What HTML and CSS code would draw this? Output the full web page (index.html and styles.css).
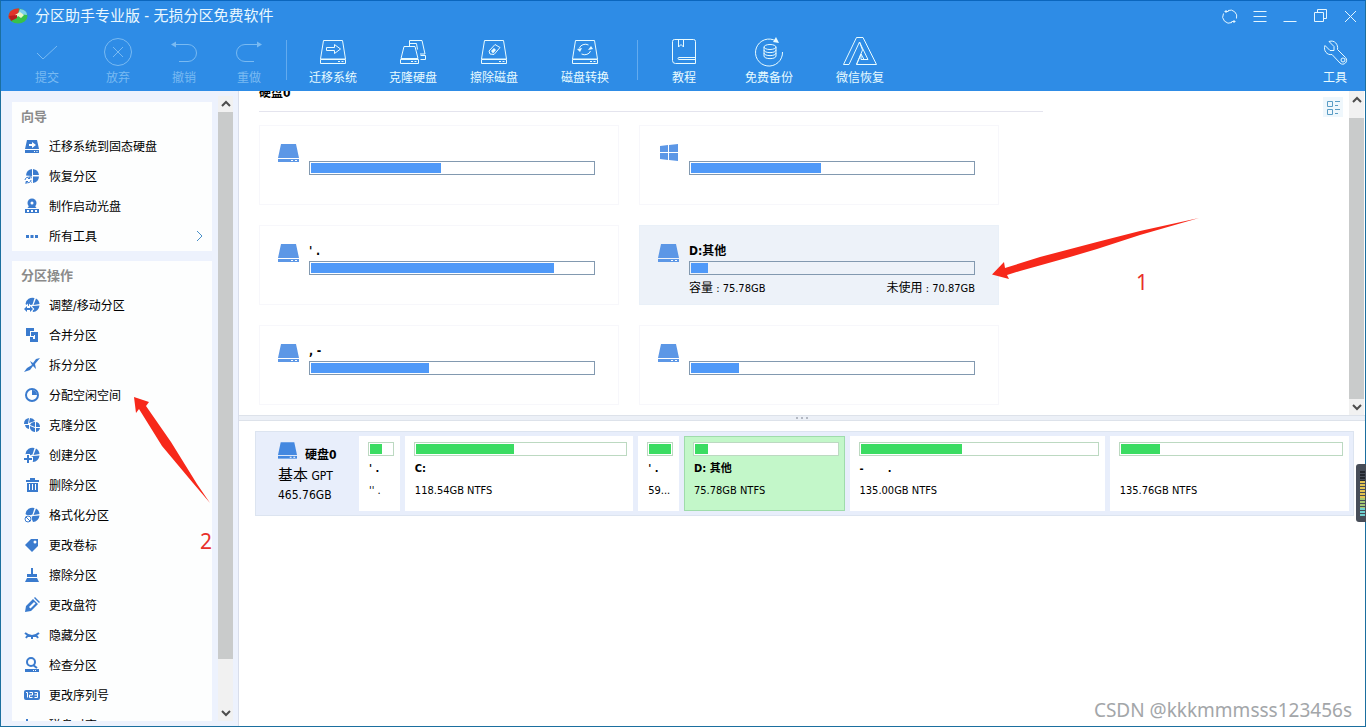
FILE: index.html
```html
<!DOCTYPE html>
<html lang="zh-CN">
<head>
<meta charset="utf-8">
<title>分区助手专业版 - 无损分区免费软件</title>
<link rel="stylesheet" href="styles.css">
</head>
<body>
<svg class="defs" aria-hidden="true">
  <symbol id="disk" viewBox="0 0 21 18"><path d="M3 0h15l3 14H0z"/><path d="M0 15h21v3H0z"/><path d="M13 16h2v1h-2zM17 16h2v1h-2z" fill="#fff"/></symbol>
  <symbol id="case" viewBox="0 0 30 30"><path d="M5.500 3.500h19l3 18.500h-25z M2.500 22.500h25v4h-25z M20 24.500h2 M23.500 24.500h2"/></symbol>
  <symbol id="pie" viewBox="0 0 16 16"><path d="M8 1a7 7 0 0 0-6 6.500l6 .5z M9 1v6h6a7 7 0 0 0-6-6z M15 8.500H9V15a7 7 0 0 0 6-6.500z M3 8.500h5V15a7 7 0 0 1-5-6.500z"/></symbol>
  <symbol id="pie2" viewBox="0 0 16 16"><path d="M1.500 7a7 7 0 0 1 9-6L8.500 7.500 4 9z M12 1.500a7 7 0 0 1 3.500 5.500l-6 1z M15.500 8.500a7 7 0 0 1-6.500 6.500L7 10l2-1z"/></symbol>
</svg>
<div class="window">
  <header class="header">
    <div class="titlebar">
      <svg class="logo" viewBox="0 0 20 16"><ellipse cx="10" cy="8" rx="9.500" ry="7.500" fill="#37c24a"/><path d="M10 8L1 11A9 8 0 0 1 11 0.500z" fill="#e0332c"/><path d="M10 6L12 1Q19 2 19 7z" fill="#7fd0ee"/><path d="M7 7l5-3 4 3-3 3-3-2-2 2z" fill="#e9f6c8"/><path d="M1 8l8-1v3l-6 3z" fill="#b81d20"/></svg>
      <h1 class="title">分区助手专业版 - 无损分区免费软件</h1>
      <button class="winbtn" aria-label="刷新"><svg viewBox="0 0 18 18"><path d="M15.500 11.500A6.500 6.500 0 0 0 7 3.500M2.500 6.500a6.500 6.500 0 0 0 8.500 9M3.500 4.500h4M14.500 14.500h-4M5 3v3M13 13v3"/></svg></button>
      <button class="winbtn" aria-label="菜单"><svg viewBox="0 0 18 18"><path d="M2.500 4.500h13M2.500 9.500h13M2.500 14.500h13"/></svg></button>
      <button class="winbtn" aria-label="最小化"><svg viewBox="0 0 18 18"><path d="M2.500 14.500h13"/></svg></button>
      <button class="winbtn" aria-label="还原"><svg viewBox="0 0 18 18"><path d="M3.500 5.500h9v9h-9zM6.500 5V2.500h9v9h-3"/></svg></button>
      <button class="winbtn" aria-label="关闭"><svg viewBox="0 0 18 18"><path d="M4 4l11 11M15 4L4 15"/></svg></button>
    </div>
    <nav class="toolbar">
      <button class="tool" disabled><svg viewBox="0 0 30 30"><path d="M5 16l6 6L25 9"/></svg>提交</button>
      <button class="tool" disabled><svg viewBox="0 0 30 30"><circle cx="15" cy="15" r="13.500"/><path d="M10 10l10 10M20 10L10 20"/></svg>放弃</button>
      <button class="tool" disabled><svg viewBox="0 0 30 30"><path d="M4 7.500h15a8.500 8.500 0 0 1 0 17H10"/><path d="M2 7.500l5-3v6z" class="solid"/></svg>撤销</button>
      <button class="tool" disabled><svg viewBox="0 0 30 30"><path d="M26 7.500H11a8.500 8.500 0 0 0 0 17H20"/><path d="M28 7.500l-5-3v6z" class="solid"/></svg>重做</button>
      <span class="sep"></span>
      <button class="tool"><svg viewBox="0 0 30 30"><use href="#case"/><path d="M8.500 10.500h8v-3l6 4.500-6 4.500v-3h-8z"/></svg>迁移系统</button>
      <button class="tool"><svg viewBox="0 0 30 30"><path d="M6 9.500h11l3 12H3z M2.500 22.500h18v4h-18z M13 24.500h2M16.500 24.500h2M11.500 9V3.500H24l3 13.500h-5M22.500 18.500h5v4h-5M19.500 12.500l-1-6h-7"/></svg>克隆硬盘</button>
      <button class="tool"><svg viewBox="0 0 30 30"><use href="#case"/><path d="M10 14l6-6.500 5 3-6 7-4-.5z"/><path d="M12 14l3-3 2 2-3 3.500z" class="solid"/></svg>擦除磁盘</button>
      <button class="tool"><svg viewBox="0 0 30 30"><use href="#case"/><path d="M9.500 11a6 5 0 0 1 9-3M20.500 14a6 5 0 0 1-9 3"/><path d="M7 12l5-1-2 4zM18 13l5-1-2-3z" class="solid"/></svg>磁盘转换</button>
      <span class="sep"></span>
      <button class="tool"><svg viewBox="0 0 30 30"><path d="M5.500 2.500h19a2 2 0 0 1 2 2v22h-20a3 3 0 0 1-3-3v-19a2 2 0 0 1 2-2zM9.500 3v7l2.500-2.500 2.500 2.500V3M26 20.500H10a1 1 0 0 0 0 2h16"/></svg>教程</button>
      <button class="tool"><svg viewBox="0 0 30 30"><path d="M22 4A13.500 13.500 0 1 0 28.500 15"/><path d="M22 0l3 6-6-1z" class="solid"/><ellipse cx="16" cy="10" rx="6" ry="2.500"/><path d="M10 10v9c0 3.500 12 3.500 12 0v-9M10 13c0 3.500 12 3.500 12 0M10 16c0 3.500 12 3.500 12 0"/></svg>免费备份</button>
      <button class="tool"><svg class="wide" viewBox="0 0 36 30"><path d="M14.500.5h6.500L34.500 27.500H14.500L19 17l3 5.500h4L17.500 5 7 27.500H1.500zM17.500 5l3 8-6 14.500M19 17v5.500h3"/></svg>微信恢复</button>
      <button class="tool last"><svg viewBox="0 0 30 30"><path d="M9 4.500l5 5v4h-4l-5-5c-2 5 2 10 7 9l8 8.500c3.500 3.500 9-1.500 5.500-5.500L17.500 12.500c1-5-3-10-8.500-8z"/><circle cx="23" cy="23" r="2"/></svg>工具</button>
    </nav>
  </header>
  <div class="body">
    <aside class="sidebar">
      <div class="panels">
        <section class="panel">
          <h2>向导</h2>
          <button class="row"><svg viewBox="0 0 16 16"><path d="M3 2h10l2 9H1z M1 12h14v3H1z"/><path d="M5 6h3V4l4 3-4 3V8H5zM10 13h1v1h-1zM12.500 13h1v1h-1z" fill="#fff"/></svg><span>迁移系统到固态硬盘</span></button>
          <button class="row"><svg viewBox="0 0 16 16"><use href="#pie"/><circle cx="4" cy="12" r="4" fill="#fff"/><path d="M1 12a3 3 0 0 1 5-2M7 12a3 3 0 0 1-5 2M6 8v2.500H4M2 16v-2.500h2" class="line"/></svg><span>恢复分区</span></button>
          <button class="row"><svg viewBox="0 0 16 16"><path d="M1 11h14v4H1z M3 10c1 0 2-2 2-3h6c0 1 1 3 2 3z"/><circle cx="8" cy="5" r="4.500"/><circle cx="8" cy="5" r="1.500" fill="#fff"/><path d="M3 12h2v2H3zM7 12h2v2H7zM11 12h2v2h-2z" fill="#fff"/></svg><span>制作启动光盘</span></button>
          <button class="row"><svg viewBox="0 0 16 16"><path d="M2 7h3v3H2zM6.500 7h3v3h-3zM11 7h3v3h-3z"/></svg><span>所有工具</span><svg class="chev" viewBox="0 0 8 12"><path d="M2 1l5 5-5 5"/></svg></button>
        </section>
        <section class="panel">
          <h2>分区操作</h2>
          <button class="row"><svg viewBox="0 0 16 16"><use href="#pie2"/><path d="M0 12l3-3v2h3V9l3 3-3 3v-2H3v2z" class="halo"/></svg><span>调整/移动分区</span></button>
          <button class="row"><svg viewBox="0 0 16 16"><path d="M2 1h8v3H6v5H2z M7 5h7v10H6v-5h3v2h2V8H7z"/><path d="M7 5h3v4H7z"/></svg><span>合并分区</span></button>
          <button class="row"><svg viewBox="0 0 16 16"><path d="M16 1l-4 1-3 4-3-2 2 4-5 3-3 4 6-2 3-4 3 3-1-5z"/></svg><span>拆分分区</span></button>
          <button class="row"><svg viewBox="0 0 16 16"><circle cx="8" cy="8" r="6" class="ring"/><path d="M8 3a5 5 0 0 1 5 5H8z"/></svg><span>分配空闲空间</span></button>
          <button class="row"><svg viewBox="0 0 16 16"><path d="M0 7a6 6 0 0 1 5-6l-1 6zM6 1a6 6 0 0 1 5 3l-6 2zM1 8h4v4a5 5 0 0 1-4-4zM6 8a5 5 0 0 1 5-3v5zM12 5a5 5 0 0 1 4 5h-4zM6 9l5 2v4a5 5 0 0 1-5-6zM12 11h4a5 5 0 0 1-4 4z"/></svg><span>克隆分区</span></button>
          <button class="row"><svg viewBox="0 0 16 16"><use href="#pie2"/><path d="M3 8h2v3h3v2H5v3H3v-3H0v-2h3z" class="halo"/></svg><span>创建分区</span></button>
          <button class="row"><svg viewBox="0 0 16 16"><path d="M6 1h5v2h4v2H2V3h4zM3 6h11v9H3z"/><path d="M5 7h1v6H5zM8 7h1v6H8zM11 7h1v6h-1z" fill="#fff"/></svg><span>删除分区</span></button>
          <button class="row"><svg viewBox="0 0 16 16"><use href="#pie2"/><circle cx="4" cy="12" r="4" fill="#fff"/><circle cx="4" cy="12" r="3" class="line"/><path d="M2 10l4 4" class="line"/></svg><span>格式化分区</span></button>
          <button class="row"><svg viewBox="0 0 16 16"><path d="M1 8l6-6 7 0v7l-6 6z"/><circle cx="11" cy="5" r="1.500" fill="#fff"/></svg><span>更改卷标</span></button>
          <button class="row"><svg viewBox="0 0 16 16"><path d="M7 1h2v6h4v3H3V7h4zM3 11h10l2 4H1z"/></svg><span>擦除分区</span></button>
          <button class="row"><svg viewBox="0 0 16 16"><path d="M1 15l1-6 7-7 5 5-7 7zM10 1l1-1 5 5-1 1z"/><path d="M5 10l5-5 1.500 1.500-5 5z" fill="#fff"/></svg><span>更改盘符</span></button>
          <button class="row"><svg viewBox="0 0 16 16"><path d="M1 6q7 6 14 0M4 8l-2 3M8 9v3M12 8l2 3" class="ring"/></svg><span>隐藏分区</span></button>
          <button class="row"><svg viewBox="0 0 16 16"><circle cx="7" cy="5" r="4" class="ring"/><path d="M9 8l4 3" class="ring"/><path d="M1 12h14v3H1z"/><path d="M9 13h1v1H9zM11 13h1v1h-1z" fill="#fff"/></svg><span>检查分区</span></button>
          <button class="row"><svg viewBox="0 0 16 16"><rect x="0" y="3" width="16" height="10" rx="2"/><path d="M2 5.500h1.500v5M5.500 5.500h3V8h-3v2.500h3M10.500 5.500h3v5h-3M10.500 8h3" class="wline"/></svg><span>更改序列号</span></button>
          <button class="row"><svg viewBox="0 0 16 16"><path d="M2 2h2v12H2z"/></svg><span>磁盘对齐</span></button>
        </section>
      </div>
      <div class="scroll" aria-hidden="true"><svg viewBox="0 0 15 16"><path d="M4 10l4-4 4 4"/></svg><i class="thumb"></i><svg viewBox="0 0 15 16"><path d="M4 6l4 4 4-4"/></svg></div>
    </aside>
    <main class="main">
      <section class="upper">
        <div class="volumes">
          <h2 class="diskname">硬盘0</h2>
          <div class="cards">
            <article class="card"><svg class="disk"><use href="#disk"/></svg><div class="info"><h3></h3><div class="bar"><i style="width:46%"></i></div><p></p></div></article>
            <article class="card"><svg class="disk" viewBox="0 0 21 18"><path d="M2 2l8-1v7H2zM11 1l9-1v8h-9zM2 9h8v7l-8-1zM11 9h9v8l-9-1z"/></svg><div class="info"><h3></h3><div class="bar"><i style="width:46%"></i></div><p></p></div></article>
            <article class="card"><svg class="disk"><use href="#disk"/></svg><div class="info"><h3>' .</h3><div class="bar"><i style="width:86%"></i></div><p></p></div></article>
            <article class="card selected"><svg class="disk"><use href="#disk"/></svg><div class="info"><h3>D:其他</h3><div class="bar"><i style="width:6%"></i></div><p><span><span class="key">容量</span> : 75.78GB</span><span><span class="key">未使用</span> : 70.87GB</span></p></div></article>
            <article class="card"><svg class="disk"><use href="#disk"/></svg><div class="info"><h3>, -</h3><div class="bar"><i style="width:42%"></i></div><p></p></div></article>
            <article class="card"><svg class="disk"><use href="#disk"/></svg><div class="info"><h3></h3><div class="bar"><i style="width:17%"></i></div><p></p></div></article>
          </div>
        </div>
        <button class="view" aria-label="视图"><svg viewBox="0 0 20 20"><path d="M4.500 4.500h5v5h-5zM4.500 12.500h5v5h-5zM12 4.500h5M12 8.500h3M12 12.500h5M12 16.500h3"/></svg></button>
        <div class="scroll right" aria-hidden="true"><svg viewBox="0 0 15 16"><path d="M4 10l4-4 4 4"/></svg><i class="thumb"></i><svg viewBox="0 0 15 16"><path d="M4 6l4 4 4-4"/></svg></div>
      </section>
      <div class="splitter"><i></i><i></i><i></i></div>
      <section class="lower">
        <div class="diskrow">
          <div class="disklabel"><div class="diskhead"><svg class="disk"><use href="#disk"/></svg><b>硬盘0</b></div><div><span class="kind">基本</span> GPT</div><div>465.76GB</div></div>
          <div class="part"><div class="bar"><i style="width:55%"></i></div><b>' .</b><span>'' .</span></div>
          <div class="part"><div class="bar"><i style="width:47%"></i></div><b>C:</b><span>118.54GB NTFS</span></div>
          <div class="part"><div class="bar"><i style="width:100%"></i></div><b>' .</b><span>59...</span></div>
          <div class="part active"><div class="bar"><i style="width:9%"></i></div><b>D: 其他</b><span>75.78GB NTFS</span></div>
          <div class="part"><div class="bar"><i style="width:43%"></i></div><b>- &nbsp; &nbsp; &nbsp; .</b><span>135.00GB NTFS</span></div>
          <div class="part"><div class="bar"><i style="width:18%"></i></div><b></b><span>135.76GB NTFS</span></div>
        </div>
      </section>
    </main>
  </div>
</div>
<svg class="arrow arrow1" viewBox="0 0 208 64"><path d="M0 57.500L12 45l1 6 35-11 57-15 43-11L207 1l-59 17-43 14-27 8-50 14-13 4 2 4z"/></svg>
<svg class="arrow arrow2" viewBox="0 0 78 108"><path d="M0 0l15 5-3 4 25 36 26 42 13 19-17-20L28 49 5 12l-3 4z"/></svg>
<span class="note note1">1</span>
<span class="note note2">2</span>
<svg class="meter" viewBox="0 0 10 58"><path d="M10 0H3a3 3 0 0 0-3 3v52a3 3 0 0 0 3 3h7z" fill="#474d58"/><path d="M6.500 7v10" stroke="#22262d"/><path d="M6.500 17v17" stroke="#e2c351"/><path d="M6.500 34v10" stroke="#a5c874"/><path d="M6.500 44v9" stroke="#6fd0cf"/></svg>
<span class="watermark">CSDN @kkkmmmsss123456s</span>
</body>
</html>
```

FILE: styles.css
```css
* { box-sizing: border-box; }
body {
  margin: 0;
  font-family: "DejaVu Sans Condensed", "Noto Sans", "Noto Sans CJK SC", sans-serif;
  font-size: 12px;
  line-height: 16px;
  color: #000;
  overflow: hidden;
  position: relative;
}
h1, h2, h3, p { margin: 0; }
button {
  border: 0;
  padding: 0;
  background: none;
  font: inherit;
  color: inherit;
}
i { display: block; }
.defs { position: absolute; width: 0; height: 0; }
.window {
  display: flex;
  flex-direction: column;
  height: 100vh;
  border: 1px solid #1b6f9f;
  border-top-color: #0b66bd;
}

/* Header */
.header { background: #2e8ce6; color: #fff; flex: none; }
.titlebar { display: flex; align-items: center; height: 30px; padding-left: 7px; }
.logo { width: 20px; height: 16px; margin-right: 7px; }
.title { flex: 1; font-size: 15px; font-weight: 400; line-height: 20px; color: #eaf8ff; }
.winbtn { width: 30px; height: 30px; display: flex; align-items: center; justify-content: center; }
.winbtn svg { width: 18px; height: 18px; fill: none; stroke: #e4f6ff; }
.toolbar {
  display: grid;
  grid-template-columns: 72px 70px 62px 68px 6px 88px 72px 90px 92px 12px 82px 88px 94px 1fr;
  padding: 6px 0 5px 10px;
}
.tool { display: flex; flex-direction: column; align-items: center; gap: 3px; color: #e8fbff; }
.tool:disabled { color: #79baf2; }
.tool svg { width: 30px; height: 30px; fill: none; stroke: currentColor; }
.tool svg.wide { width: 36px; }
.tool .solid { fill: currentColor; stroke: none; }
.tool.last { justify-self: end; width: 60px; }
.sep { width: 1px; height: 40px; margin: 3px auto; background: #63abef; }

/* Sidebar */
.body { flex: 1; display: flex; min-height: 0; }
.sidebar {
  width: 238px;
  flex: none;
  display: flex;
  gap: 6px;
  padding: 5px 5px 5px 11px;
  background: #edf2fd;
  border-right: 1px solid #d9deeb;
}
.panels { flex: 1; display: flex; flex-direction: column; gap: 10px; padding-top: 6px; overflow: hidden; }
.panel { flex: none; background: #fdfefe; }
.panel h2 { font-size: 13px; line-height: 29px; padding-left: 9px; color: #8b8b8b; }
.row { display: flex; align-items: center; gap: 9px; width: 100%; height: 30px; padding: 0 9px 0 12px; text-align: left; }
.row span { padding-top: 2px; }
.row svg { width: 16px; height: 16px; fill: #3a7bce; }
.row .line, .row .ring, .row .wline { fill: none; stroke: #3a7bce; }
.row .ring { stroke-width: 2; }
.row .wline { stroke: #fff; }
.row .halo { stroke: #fff; stroke-width: 2; paint-order: stroke; }
.row .chev { width: 8px; height: 12px; margin-left: auto; fill: none; stroke: #4a90c8; }
.scroll { width: 15px; flex: none; display: flex; flex-direction: column; background: #f1f1f1; }
.scroll svg { width: 15px; height: 16px; flex: none; fill: none; stroke: #4c4c4c; stroke-width: 2; }
.scroll .thumb { flex: 1; background: #c9cbcb; }
.sidebar .thumb { margin-bottom: 46px; }

/* Volume list */
.main { flex: 1; display: flex; flex-direction: column; min-width: 0; background: #fff; }
.upper { height: 324px; flex: none; display: flex; padding-right: 1px; overflow: hidden; }
.volumes { flex: 1; padding-left: 20px; }
.diskname { height: 21px; margin-right: 280px; border-bottom: 1px solid #e4e4ee; font-size: 12px; line-height: 4px; }
.cards { display: grid; grid-template-columns: repeat(2, 360px); gap: 20px; padding-top: 13px; }
.card { display: flex; gap: 10px; height: 80px; padding: 18px 23px 0 18px; border: 1px solid #f7f7fb; }
.card.selected { background: #edf2f9; border-color: #e9f0f8; }
.disk { width: 21px; height: 18px; flex: none; fill: #5c97e6; }
.info { flex: 1; }
.info h3 { height: 17px; font-size: 12px; line-height: 14px; }
.bar { border: 1px solid #8299b0; padding: 1px; height: 14px; }
.bar i { height: 10px; background: #4f99f8; }
.info p { display: flex; justify-content: space-between; font-size: 11px; padding-top: 5px; }
.key { font-size: 12px; }
.view { width: 20px; height: 20px; margin: 6px 6px 0 0; background: #eff7fc; }
.view svg { width: 20px; height: 20px; display: block; fill: none; stroke: #5a9cc4; }
.scroll.right { padding-top: 1px; }
.scroll.right .thumb { margin: 10px 0 0; }

/* Disk map */
.splitter { height: 6px; flex: none; display: flex; justify-content: center; align-items: center; gap: 3px; background: #ecf0f7; border: 1px solid #dde2ea; border-width: 1px 0; }
.splitter i { width: 2px; height: 2px; background: #b3b8c2; }
.lower { flex: 1; padding: 10px 11px 0 16px; }
.diskrow {
  display: grid;
  grid-template-columns: 98px 41fr 229fr 41fr 161fr 256fr 240fr;
  gap: 5px;
  padding: 4px 4px 4px 0;
  background: #e8eefb;
  border: 1px solid #dce4f0;
}
.disklabel { padding: 6px 0 0 22px; line-height: 19px; }
.diskhead { display: flex; gap: 8px; height: 24px; }
.diskhead .disk { width: 19px; height: 17px; fill: #4488e0; }
.diskhead b { line-height: 27px; }
.kind { font-size: 15px; }
.part { height: 75px; display: flex; flex-direction: column; padding: 5px 5px 0 8px; background: #fff; border: 1px solid transparent; font-size: 11px; overflow: hidden; }
.part .bar { border-color: #bcd9c1; background: #fff; }
.part .bar i { background: #3bdc62; }
.part b { height: 22px; padding: 5px 0 0 1px; }
.part span { padding: 5px 0 0 1px; white-space: nowrap; }
.part.active { background: #c3f7c9; border-color: #9fdcab; }

/* Overlays */
.arrow { position: absolute; fill: #f7281a; }
.arrow1 { left: 992px; top: 217px; width: 208px; height: 64px; }
.arrow2 { left: 134px; top: 397px; width: 78px; height: 108px; }
.note { position: absolute; font: 21px/24px "Noto Sans", sans-serif; color: #e8302a; }
.note1 { left: 1136px; top: 270px; }
.note2 { left: 200px; top: 529px; }
.meter { position: absolute; right: 0; top: 464px; width: 10px; height: 58px; stroke-width: 5; stroke-dasharray: 2 1; }
.watermark { position: absolute; right: 14px; bottom: 5px; font: 19px/24px "Noto Sans", sans-serif; color: #a3a6a9; }
```
